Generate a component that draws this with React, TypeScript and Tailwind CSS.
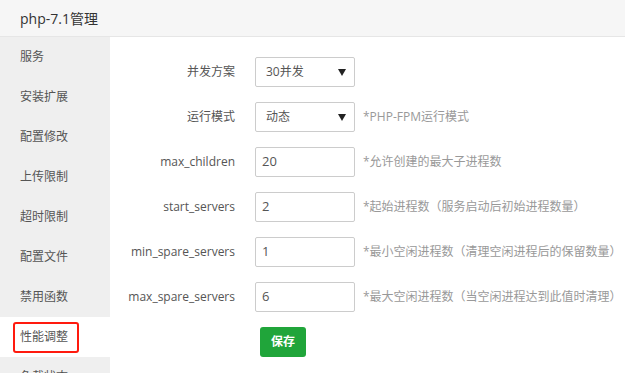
import React from "react";

const font = { fontFamily: '"Open Sans", "Noto Sans CJK SC", sans-serif' };

const menu = ["服务", "安装扩展", "配置修改", "上传限制", "超时限制", "配置文件", "禁用函数", "性能调整", "负载状态", "FPM日志"];

function Select({ value }: { value: string }) {
  return (
    <div className="relative flex h-[30px] w-[100px] items-center rounded-[2px] border border-[#cccccc] bg-white pl-[10px] text-[12px] text-[#555]">
      <span>{value}</span>
      <svg className="absolute right-[8px] top-[11px]" width="8" height="7" viewBox="0 0 8 7">
        <path d="M0 0 H8 L4 7 Z" fill="#222" />
      </svg>
    </div>
  );
}

function Input({ value }: { value: string }) {
  return (
    <div className="flex h-[30px] w-[100px] items-center rounded-[2px] border border-[#cccccc] bg-white pl-[6px] text-[13px] text-[#555]">
      {value}
    </div>
  );
}

export default function App() {
  const rows: { label: string; control: React.ReactNode; hint?: string }[] = [
    { label: "并发方案", control: <Select value="30并发" /> },
    { label: "运行模式", control: <Select value="动态" />, hint: "*PHP-FPM运行模式" },
    { label: "max_children", control: <Input value="20" />, hint: "*允许创建的最大子进程数" },
    { label: "start_servers", control: <Input value="2" />, hint: "*起始进程数（服务启动后初始进程数量）" },
    { label: "min_spare_servers", control: <Input value="1" />, hint: "*最小空闲进程数（清理空闲进程后的保留数量）" },
    { label: "max_spare_servers", control: <Input value="6" />, hint: "*最大空闲进程数（当空闲进程达到此值时清理）" },
  ];
  return (
    <div className="flex h-[373px] w-[625px] flex-col overflow-hidden bg-white" style={font}>
      <div className="flex h-[37px] shrink-0 items-center border-b border-[#e6e6e6] bg-[#f6f6f6] pl-[20px] text-[14px] text-[#333]">
        php-7.1管理
      </div>
      <div className="flex flex-1 overflow-hidden">
        <div className="flex w-[110px] shrink-0 flex-col bg-[#efefef]">
          {menu.map((m, i) =>
            i === 7 ? (
              <div key={m} className="flex h-[40px] shrink-0 items-center bg-white pl-[13px]">
                <div className="flex h-[31px] w-[66px] items-center rounded-[3px] border-2 border-[#ff1a0e] pl-[5px] text-[12px] text-[#555]">
                  {m}
                </div>
              </div>
            ) : (
              <div key={m} className="flex h-[40px] shrink-0 items-center pl-[20px] text-[12px] text-[#555]">
                {m}
              </div>
            )
          )}
        </div>
        <div className="flex flex-1 flex-col gap-[15px] pt-[20px]">
          {rows.map((r) => (
            <div key={r.label} className="flex h-[30px] items-center">
              <div className="w-[125px] text-right text-[12px] text-[#555]">{r.label}</div>
              <div className="ml-[20px]">{r.control}</div>
              {r.hint && <div className="ml-[8px] whitespace-nowrap text-[12px] text-[#999]">{r.hint}</div>}
            </div>
          ))}
          <div className="flex pl-[150px]">
            <div className="flex h-[30px] w-[46px] items-center justify-center rounded-[3px] bg-[#20a53a] text-[12px] font-bold text-white">
              保存
            </div>
          </div>
        </div>
      </div>
    </div>
  );
}
